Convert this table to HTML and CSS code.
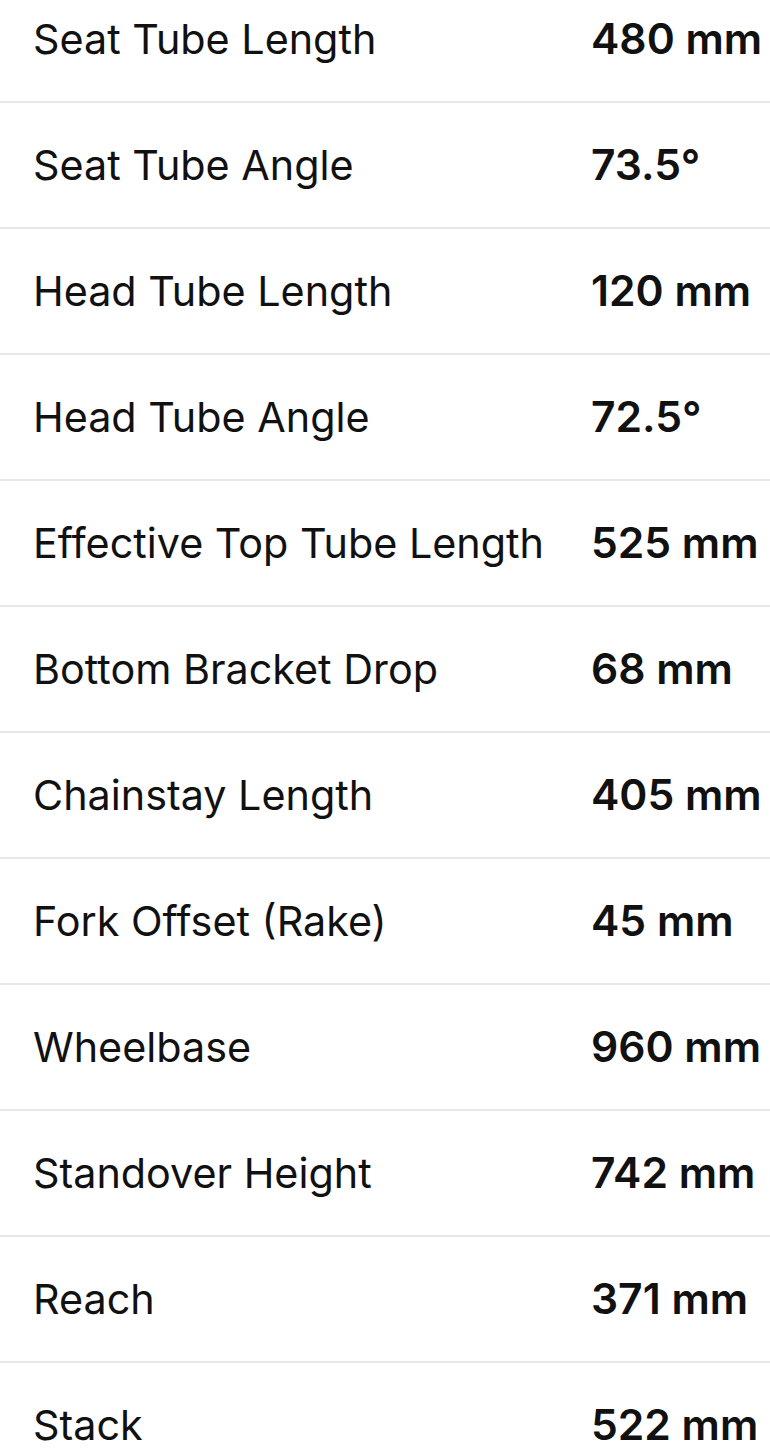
FILE: index.html
```html
<!DOCTYPE html>
<html lang="en">
<head>
    <meta charset="UTF-8">
    <meta name="viewport" content="width=device-width, initial-scale=1.0">
    <title>Geometry</title>
    <link rel="stylesheet" href="styles.css">
</head>
<body>

    <div class="geometry">
        <div class="row"><span class="label">Seat Tube Length</span><span class="value">480 mm</span></div>
        <div class="row"><span class="label">Seat Tube Angle</span><span class="value">73.5°</span></div>
        <div class="row"><span class="label">Head Tube Length</span><span class="value">120 mm</span></div>
        <div class="row"><span class="label">Head Tube Angle</span><span class="value">72.5°</span></div>
        <div class="row"><span class="label">Effective Top Tube Length</span><span class="value">525 mm</span></div>
        <div class="row"><span class="label">Bottom Bracket Drop</span><span class="value">68 mm</span></div>
        <div class="row"><span class="label">Chainstay Length</span><span class="value">405 mm</span></div>
        <div class="row"><span class="label">Fork Offset (Rake)</span><span class="value">45 mm</span></div>
        <div class="row"><span class="label">Wheelbase</span><span class="value">960 mm</span></div>
        <div class="row"><span class="label">Standover Height</span><span class="value">742 mm</span></div>
        <div class="row"><span class="label">Reach</span><span class="value">371 mm</span></div>
        <div class="row"><span class="label">Stack</span><span class="value">522 mm</span></div>
    </div>

</body>
</html>
```

FILE: styles.css
```css
html, body {
    margin: 0;
    padding: 0;
    background-color: #fff;
}

body {
    font-family: Inter, "Liberation Sans", Arial, sans-serif;
    color: #111;
    overflow: hidden;
}

.geometry {
    margin-top: -24px;
}

.row {
    display: flex;
    height: 124px;
    line-height: 124px;
    padding-top: 1px;
    box-sizing: content-box;
    margin-top: -1px;
    padding-left: 33px;
    border-bottom: 2px solid #e7e7e7;
    white-space: nowrap;
}

.label {
    flex: 0 0 558px;
    font-size: 41.3px;
}

.value {
    font-size: 42.6px;
    font-weight: 600;
}
```
